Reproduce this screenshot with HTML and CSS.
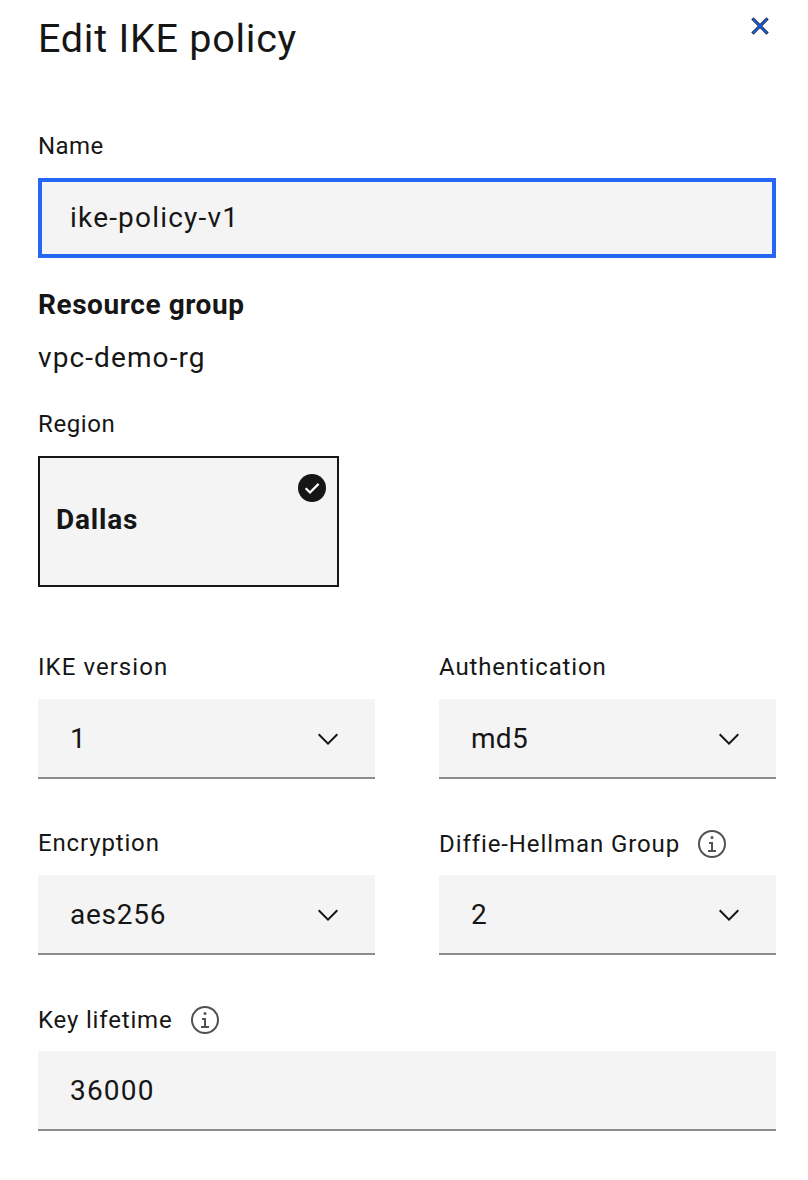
FILE: index.html
```html
<!DOCTYPE html>
<html lang="en">
<head>
<meta charset="utf-8">
<title>Edit IKE policy</title>
<link rel="stylesheet" href="styles.css">
</head>
<body>
<svg class="defs" aria-hidden="true">
  <symbol id="chevron" viewBox="0 0 16 16"><path d="M8 11 3 6 3.7 5.3 8 9.6 12.3 5.3 13 6z"/></symbol>
  <symbol id="info" viewBox="0 0 32 32"><path d="M17 22V14H13v2h2v6H12v2h8V22zM16 8a1.5 1.5 0 1 0 1.5 1.5A1.5 1.5 0 0 0 16 8z"/><path d="M16 30A14 14 0 1 1 30 16 14 14 0 0 1 16 30zM16 4A12 12 0 1 0 28 16 12 12 0 0 0 16 4z"/></symbol>
</svg>
<main class="panel">
  <header class="header">
    <h1 class="title">Edit IKE policy</h1>
    <button class="close" aria-label="Close"><svg viewBox="0 0 20 20"><path class="close-outline" d="M2.4 2.4 17.6 17.6M17.6 2.4 2.4 17.6"/><path class="close-core" d="M2.9 2.9 17.1 17.1M17.1 2.9 2.9 17.1"/></svg></button>
  </header>
  <section class="name-group">
    <div class="label"><span class="t-name">Name</span></div>
    <div class="field focused"><span class="t-policy">ike-policy-v1</span></div>
  </section>
  <section class="resource">
    <h2 class="subhead t-resource">Resource group</h2>
    <p class="value t-vpc">vpc-demo-rg</p>
  </section>
  <section class="region">
    <div class="label"><span class="t-region">Region</span></div>
    <div class="tile">
      <strong class="t-dallas">Dallas</strong>
      <svg class="check" viewBox="0 0 28 28"><circle cx="14" cy="14" r="14"/><path d="M7.7 14.2 12 18.5 20.6 9.9"/></svg>
    </div>
  </section>
  <section class="grid">
    <div>
      <div class="label"><span class="t-version">IKE version</span></div>
      <div class="field"><span>1</span><svg class="chevron"><use href="#chevron"/></svg></div>
    </div>
    <div>
      <div class="label"><span class="t-auth">Authentication</span></div>
      <div class="field"><span class="t-md5">md5</span><svg class="chevron"><use href="#chevron"/></svg></div>
    </div>
    <div>
      <div class="label"><span class="t-encryption">Encryption</span></div>
      <div class="field"><span class="t-aes">aes256</span><svg class="chevron"><use href="#chevron"/></svg></div>
    </div>
    <div>
      <div class="label with-info"><span class="t-dh">Diffie-Hellman Group</span><svg class="info"><use href="#info"/></svg></div>
      <div class="field"><span>2</span><svg class="chevron"><use href="#chevron"/></svg></div>
    </div>
  </section>
  <section class="lifetime">
    <div class="label with-info"><span class="t-key">Key lifetime</span><svg class="info"><use href="#info"/></svg></div>
    <div class="field"><span class="t-seconds">36000</span></div>
  </section>
</main>
</body>
</html>
```
FILE: styles.css
```css
* { box-sizing: border-box; }
body { margin: 0; background: #fff; color: #161616; font-family: Roboto, "Liberation Sans", sans-serif; font-weight: 400; }
h1, h2, p { margin: 0; }
.defs { display: none; }
.panel { height: 1180px; padding: 14px 32px 0 38px; }
.header { display: flex; justify-content: space-between; height: 116px; }
.title { padding-top: 1px; font-size: 39.5px; line-height: 48px; font-weight: 400; letter-spacing: 0.75px; white-space: nowrap; }
.close { width: 32px; height: 24px; padding: 0; border: 0; background: none; display: flex; align-items: center; justify-content: center; }
.close svg { width: 20px; height: 20px; fill: none; }
.close-outline { stroke: #25282e; stroke-width: 3.2; }
.close-core { stroke: #0f62fe; stroke-width: 1.5; }
.label { height: 48px; display: flex; align-items: flex-start; font-size: 24px; line-height: 32px; letter-spacing: 0.6px; white-space: nowrap; }
.with-info { padding-top: 1px; gap: 16px; }
.info { width: 32px; height: 32px; fill: #525252; }
.field { height: 80px; padding: 2px 31px 0 32px; display: flex; align-items: center; justify-content: space-between; background: #f4f4f4; border-bottom: 2px solid #8d8d8d; font-size: 28px; line-height: 36px; letter-spacing: 0.32px; }
.focused { padding: 0 28px; border: 4px solid #2567f4; }
.chevron { width: 32px; height: 32px; fill: #161616; }
.resource { padding-top: 29px; }
.subhead, .value { font-size: 28px; line-height: 36px; }
.subhead { font-weight: 700; }
.value { margin-top: 17px; }
.region { margin-top: 32px; }
.tile { width: 301px; height: 131px; display: flex; align-items: flex-start; justify-content: space-between; padding: 15px 11px 0 16px; border: 2px solid #161616; background: #f4f4f4; font-size: 28px; line-height: 36px; }
.tile strong { margin-top: 29px; }
.check { width: 28px; height: 28px; margin-top: 0.5px; fill: #161616; }
.check path { fill: none; stroke: #fff; stroke-width: 2.2; }
.grid { display: grid; grid-template-columns: 337px 337px; gap: 48px 64px; margin-top: 64px; }
.lifetime { margin-top: 48px; }

/* Per-string tracking */
.t-name { letter-spacing: 0.45px; }
.t-policy { letter-spacing: 1.2px; }
.t-resource { letter-spacing: 0.56px; }
.t-vpc { letter-spacing: 1.1px; }
.t-dallas { letter-spacing: 0.8px; }
.t-version { letter-spacing: 1.05px; }
.t-auth { letter-spacing: 0.85px; }
.t-encryption { letter-spacing: 0.85px; }
.t-dh { letter-spacing: 0.91px; }
.t-key { letter-spacing: 0.83px; }
.t-aes { letter-spacing: 0.75px; }
.t-seconds { letter-spacing: 1.2px; }
```
